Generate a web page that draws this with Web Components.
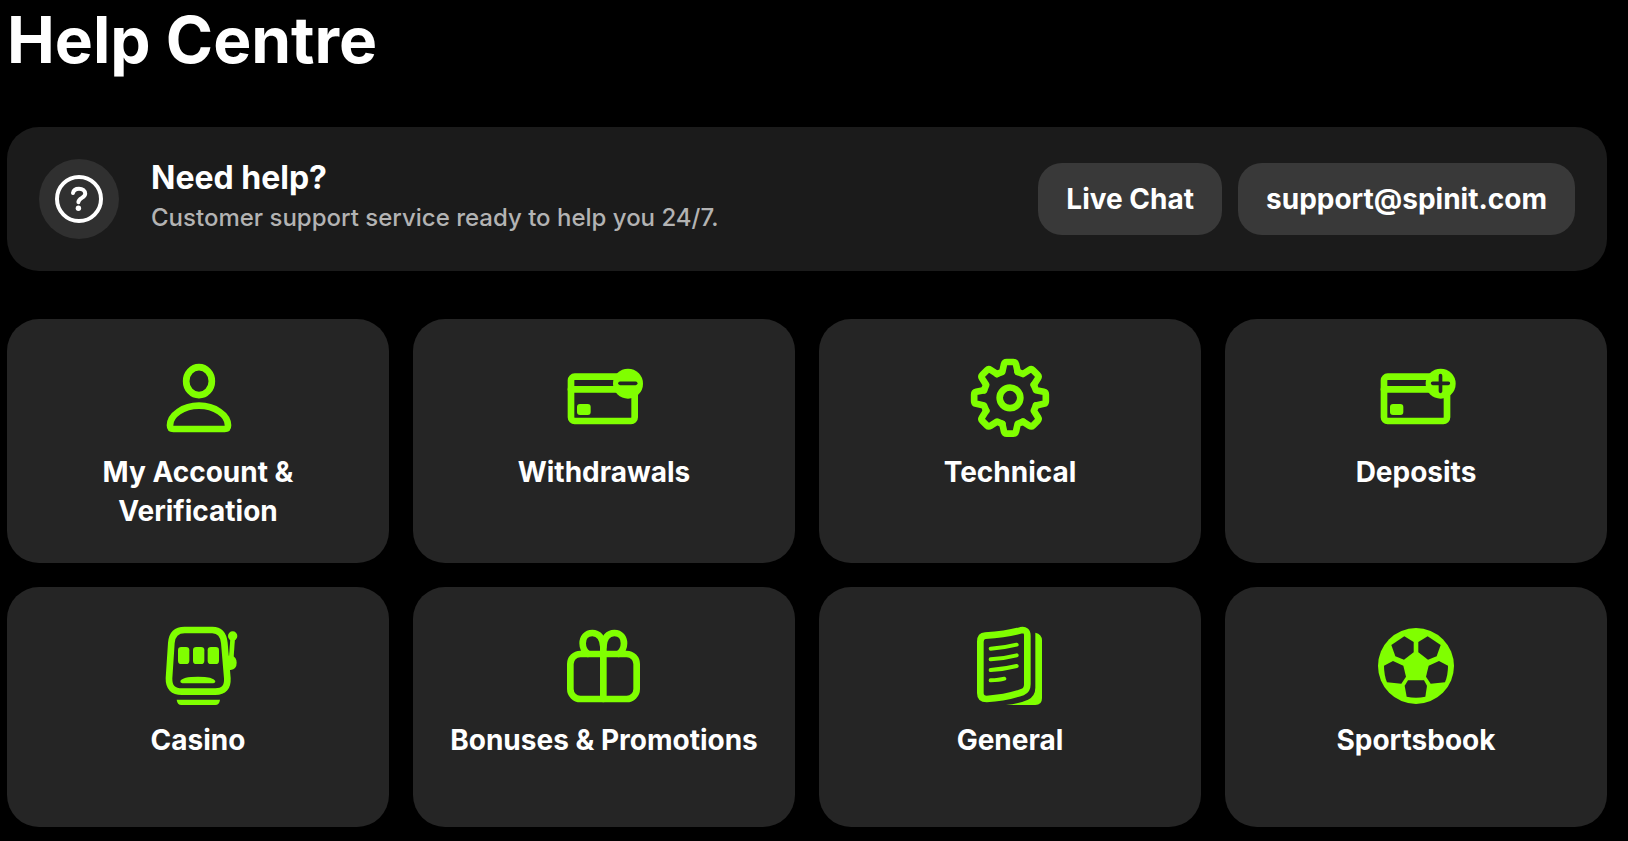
<!DOCTYPE html>
<html lang="en">
<head>
<meta charset="UTF-8">
<meta name="viewport" content="width=device-width, initial-scale=1.0">
<title>Help Centre</title>
<style>
    body {
        margin: 0;
        background-color: #000;
        color: #fff;
        font-family: Inter, "Liberation Sans", sans-serif;
    }
</style>
</head>
<body>
<help-centre heading="Help Centre">
    <help-banner slot="banner" heading="Need help?" text="Customer support service ready to help you 24/7.">
        <help-action>Live Chat</help-action>
        <help-action href="mailto:support@spinit.com">support@spinit.com</help-action>
    </help-banner>
    <help-card icon="account" href="#account">My Account &amp; Verification</help-card>
    <help-card icon="withdrawals" href="#withdrawals">Withdrawals</help-card>
    <help-card icon="technical" href="#technical">Technical</help-card>
    <help-card icon="deposits" href="#deposits">Deposits</help-card>
    <help-card icon="casino" href="#casino">Casino</help-card>
    <help-card icon="bonuses" href="#bonuses">Bonuses &amp; Promotions</help-card>
    <help-card icon="general" href="#general">General</help-card>
    <help-card icon="sportsbook" href="#sportsbook">Sportsbook</help-card>
</help-centre>

<script>
// Classes used by the drawings: "line" is stroked, "cut" takes the card colour
const icons = {
    account: `
        <svg viewBox="0 3 288 288" aria-hidden="true">
            <ellipse class="line" cx="147" cy="93.5" rx="38.5" ry="42"/>
            <path class="line" d="M70 237Q60 237 60 226C60 195 100 167 147 167C194 167 234 195 234 226Q234 237 224 237Z"/>
        </svg>`,
    withdrawals: `
        <svg viewBox="18 3 288 288" aria-hidden="true">
            <rect class="line" x="63" y="80" width="191" height="133" rx="11"/>
            <path class="line" d="M63 118H205"/>
            <rect x="81" y="162" width="41" height="33" rx="9"/>
            <circle cx="234" cy="101" r="45"/>
            <path class="line cut" d="M210 100H257"/>
        </svg>`,
    technical: `
        <svg viewBox="6 3 288 288" aria-hidden="true">
            <g class="line" transform="translate(150 143.5)">
                <path id="tooth" d="M-39 -71.4L-23 -78L-18 -101Q-16.5 -107.5 -10 -107.5H10Q16.5 -107.5 18 -101L23 -78"/>
                <use href="#tooth" transform="rotate(45)"/>
                <use href="#tooth" transform="rotate(90)"/>
                <use href="#tooth" transform="rotate(135)"/>
                <use href="#tooth" transform="rotate(180)"/>
                <use href="#tooth" transform="rotate(225)"/>
                <use href="#tooth" transform="rotate(270)"/>
                <use href="#tooth" transform="rotate(315)"/>
                <circle r="31"/>
            </g>
        </svg>`,
    deposits: `
        <svg viewBox="9 3 288 288" aria-hidden="true">
            <rect class="line" x="57" y="80" width="189" height="133" rx="11"/>
            <path class="line" d="M57 118H198"/>
            <rect x="75" y="162" width="40" height="33" rx="9"/>
            <circle cx="227" cy="101" r="45"/>
            <path class="line cut" d="M203 100H250M226.5 77V124"/>
        </svg>`,
    casino: `
        <svg viewBox="0 12 288 288" aria-hidden="true">
            <path class="line" d="M104 45H187Q219 45 223 84L232 190Q234 230 196 230H96Q56 230 57 190L64 84Q67 45 104 45Z"/>
            <rect x="84" y="96" width="34" height="51" rx="10"/>
            <rect x="129" y="96" width="34" height="51" rx="10"/>
            <rect x="173" y="96" width="34" height="51" rx="10"/>
            <path d="M97 205Q90 204 91 198Q97 185 144 185Q190 185 196 198Q197 204 190 205Z"/>
            <circle cx="248" cy="63" r="14"/>
            <path d="M241 70H255L251 126H237Z"/>
            <path d="M230 122H246Q260 126 260 143Q260 162 242 165H234Z"/>
            <path d="M80 254H210Q208 270 196 270H94Q82 270 80 254Z"/>
        </svg>`,
    bonuses: `
        <svg viewBox="3 12 288 288" aria-hidden="true">
            <rect class="line" x="46" y="117" width="199" height="135" rx="30"/>
            <path class="line" d="M145 252V95C143 68 130 54 112 54C93 54 83 69 83 85Q83 105 98 116"/>
            <path class="line" d="M145 95C147 68 160 54 178 54C197 54 207 69 207 85Q207 105 192 116"/>
        </svg>`,
    general: `
        <svg viewBox="6 12 288 288" aria-hidden="true">
            <path class="line" d="M76 62Q140 58 182 46Q202 42 202 62V208Q202 226 188 231Q140 248 80 252Q61 252 61 234V80Q61 63 76 62Z"/>
            <path class="line thin" d="M92 101Q135 98 170 89M92 133Q135 130 170 121M92 165Q135 162 170 153M92 196Q118 195 133 191"/>
            <path d="M226 53Q246 58 246 76V250Q246 270 226 270H138Q180 265 204 254Q226 243 226 218Z"/>
        </svg>`,
    sportsbook: `
        <svg viewBox="9 12 288 288" aria-hidden="true">
            <circle cx="153" cy="153" r="114"/>
            <g class="cut">
                <path d="M79 90L118 64L146 81V112L117 134L91 124Z"/>
                <path d="M227 90L188 64L160 81V112L189 134L215 124Z"/>
                <path d="M57 152L84 138L115 152L123 185L109 206L66 202Q57 180 57 152Z"/>
                <path d="M249 152L222 138L191 152L183 185L197 206L240 202Q249 180 249 152Z"/>
                <path d="M129 196H177L186 212L181 245Q153 251 125 245L119 212Z"/>
            </g>
        </svg>`
};

class HelpCentre extends HTMLElement {
    connectedCallback() {
        this.attachShadow({ mode: 'open' });
        this.shadowRoot.innerHTML = `
            <style>
                :host {
                    display: block;
                    padding: 0 21px 14px 7px;
                }

                h1 {
                    margin: 0 0 48px;
                    font-size: 64px;
                    font-weight: 700;
                    line-height: 79px;
                }

                .grid {
                    display: grid;
                    grid-template-columns: repeat(4, 1fr);
                    gap: 24px;
                    margin-top: 48px;
                }

                @media (max-width: 1200px) {
                    .grid {
                        grid-template-columns: repeat(2, 1fr);
                    }
                }
            </style>
            <main>
                <h1>${this.getAttribute('heading')}</h1>
                <slot name="banner"></slot>
                <nav class="grid"><slot></slot></nav>
            </main>
        `;
    }
}

class HelpBanner extends HTMLElement {
    connectedCallback() {
        this.attachShadow({ mode: 'open' });
        this.shadowRoot.innerHTML = `
            <style>
                :host {
                    display: block;
                }

                .banner {
                    display: flex;
                    flex-wrap: wrap;
                    align-items: center;
                    gap: 32px;
                    padding: 32px;
                    border-radius: 32px;
                    background-color: #1b1b1b;
                }

                .badge {
                    display: flex;
                    align-items: center;
                    justify-content: center;
                    width: 80px;
                    height: 80px;
                    border-radius: 50%;
                    background-color: #303030;
                }

                svg {
                    width: 48px;
                    height: 48px;
                    fill: none;
                    stroke: #fff;
                    stroke-width: 4;
                    stroke-linecap: round;
                    stroke-linejoin: round;
                }

                .text {
                    flex: 1;
                    align-self: flex-start;
                }

                h2 {
                    margin: 0 0 4px;
                    font-size: 32px;
                    font-weight: 700;
                    line-height: 38px;
                }

                p {
                    margin: 0;
                    color: #b3b3b3;
                    font-size: 24px;
                    font-weight: 500;
                    line-height: 34px;
                }

                .actions {
                    display: flex;
                    gap: 16px;
                }
            </style>
            <section class="banner">
                <div class="badge">
                    <svg viewBox="0 0 48 48" aria-hidden="true">
                        <circle cx="24" cy="24" r="22"/>
                        <path d="M18 18C18.5 15.200 21 13.700 24 13.700C27.500 13.700 30.200 15.800 30.200 18.800C30.200 23 23.600 22.800 23.400 27.200"/>
                        <circle cx="23.400" cy="33.300" r="2.700" fill="#fff" stroke="none"/>
                    </svg>
                </div>
                <div class="text">
                    <h2>${this.getAttribute('heading')}</h2>
                    <p>${this.getAttribute('text')}</p>
                </div>
                <div class="actions"><slot></slot></div>
            </section>
        `;
    }
}

class HelpAction extends HTMLElement {
    connectedCallback() {
        const href = this.getAttribute('href');

        this.attachShadow({ mode: 'open' });
        this.shadowRoot.innerHTML = `
            <style>
                :host {
                    display: block;
                }

                .action {
                    display: block;
                    padding: 16px 28px;
                    border: none;
                    border-radius: 24px;
                    background-color: #393939;
                    color: #fff;
                    font-family: inherit;
                    font-size: 28px;
                    font-weight: 700;
                    line-height: 40px;
                    text-decoration: none;
                    white-space: nowrap;
                    cursor: pointer;
                    transition: background-color 0.2s ease;
                }

                .action:hover {
                    background-color: #484848;
                }
            </style>
            ${href
                ? `<a class="action" href="${href}"><slot></slot></a>`
                : '<button class="action" type="button"><slot></slot></button>'}
        `;
    }
}

class HelpCard extends HTMLElement {
    connectedCallback() {
        const icon = icons[this.getAttribute('icon')];

        this.attachShadow({ mode: 'open' });
        this.shadowRoot.innerHTML = `
            <style>
                :host {
                    --card: #252525;
                    display: flex;
                    min-height: 240px;
                }

                .card {
                    flex: 1;
                    display: flex;
                    flex-direction: column;
                    align-items: center;
                    gap: 6px;
                    padding: 32px;
                    border-radius: 32px;
                    background-color: var(--card);
                    color: #fff;
                    font-size: 28px;
                    font-weight: 700;
                    line-height: 39px;
                    text-align: center;
                    text-decoration: none;
                    transition: background-color 0.2s ease;
                }

                .card:hover {
                    --card: #303030;
                }

                svg {
                    width: 96px;
                    height: 96px;
                    fill: #80ff00;
                }

                .line {
                    fill: none;
                    stroke: #80ff00;
                    stroke-width: 20;
                    stroke-linecap: round;
                    stroke-linejoin: round;
                }

                .thin {
                    stroke-width: 12;
                }

                .cut {
                    fill: var(--card);
                }

                .line.cut {
                    fill: none;
                    stroke: var(--card);
                    stroke-width: 11;
                }
            </style>
            <a class="card" href="${this.getAttribute('href')}">
                ${icon}
                <span><slot></slot></span>
            </a>
        `;
    }
}

customElements.define('help-centre', HelpCentre);
customElements.define('help-banner', HelpBanner);
customElements.define('help-action', HelpAction);
customElements.define('help-card', HelpCard);
</script>
</body>
</html>
